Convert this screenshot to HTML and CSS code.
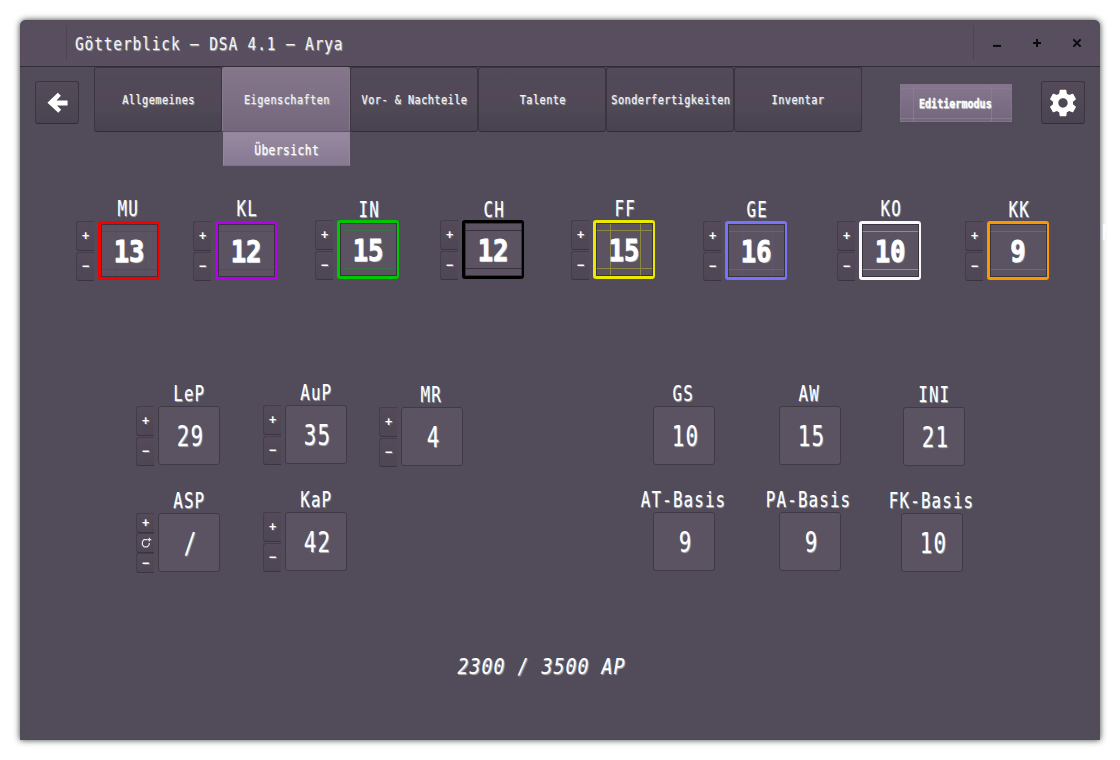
FILE: index.html
```html
<!DOCTYPE html>
<html lang="de">
<head>
<meta charset="utf-8">
<title>Götterblick – DSA 4.1 – Arya</title>
<link rel="stylesheet" href="styles.css">
</head>
<body>
<div class="window">
  <header class="titlebar">
    <span class="sep"></span>
    <h1 class="title"><span class="t">Götterblick – DSA 4.1 – Arya</span></h1>
    <div class="controls">
      <svg viewBox="0 0 12 12"><path d="M2 8.9h8" /></svg>
      <svg viewBox="0 0 12 12"><path d="M2 6h8M6 2v8" /></svg>
      <svg viewBox="0 0 12 12"><path d="M2.4 2.4l7.2 7.2M9.6 2.4l-7.2 7.2" /></svg>
    </div>
  </header>
  <nav class="toolbar">
    <div class="icon-btn back"><svg viewBox="0 0 24 24"><path d="M22.5 10v5H11.5l4.3 4.6-3 3L1.5 12.3 12.3 1.8l3.2 3.2L11 10z" fill="#fff"/></svg></div>
    <div class="tabs">
      <div class="tab"><span class="t">Allgemeines</span></div>
      <div class="tabcol">
        <div class="tab active"><span class="t">Eigenschaften</span></div>
        <div class="subtab"><span class="t">Übersicht</span></div>
      </div>
      <div class="tab"><span class="t">Vor- &amp; Nachteile</span></div>
      <div class="tab"><span class="t">Talente</span></div>
      <div class="tab"><span class="t">Sonderfertigkeiten</span></div>
      <div class="tab"><span class="t">Inventar</span></div>
    </div>
    <div class="edit"><span class="t">Editiermodus</span></div>
    <div class="icon-btn gear"><svg viewBox="0 0 24 24"><path fill="#fff" d="M19.43 12.98c.04-.32.07-.64.07-.98s-.03-.66-.07-.98l2.11-1.65c.19-.15.24-.42.12-.64l-2-3.46c-.12-.22-.39-.3-.61-.22l-2.49 1c-.52-.4-1.08-.73-1.69-.98l-.38-2.65C14.46 2.18 14.25 2 14 2h-4c-.25 0-.46.18-.49.42l-.38 2.65c-.61.25-1.17.59-1.69.98l-2.49-1c-.23-.09-.49 0-.61.22l-2 3.46c-.13.22-.07.49.12.64l2.11 1.65c-.04.32-.07.65-.07.98s.03.66.07.98l-2.11 1.65c-.19.15-.24.42-.12.64l2 3.46c.12.22.39.3.61.22l2.49-1c.52.4 1.08.73 1.69.98l.38 2.65c.03.24.24.42.49.42h4c.25 0 .46-.18.49-.42l.38-2.65c.61-.25 1.17-.59 1.69-.98l2.49 1c.23.09.49 0 .61-.22l2-3.46c.12-.22.07-.49-.12-.64l-2.11-1.65zM12 15.5c-1.93 0-3.5-1.57-3.5-3.5s1.57-3.5 3.5-3.5 3.5 1.57 3.5 3.5-1.57 3.5-3.5 3.5z"/></svg></div>
  </nav>

  <section class="row attributes">
    <div class="stat mu"><span class="label">MU</span><div class="steps"><b>+</b><b>−</b></div><div class="box"><span class="t">13</span></div></div>
    <div class="stat kl"><span class="label">KL</span><div class="steps"><b>+</b><b>−</b></div><div class="box"><span class="t">12</span></div></div>
    <div class="stat in"><span class="label">IN</span><div class="steps"><b>+</b><b>−</b></div><div class="box"><span class="t">15</span></div></div>
    <div class="stat ch"><span class="label">CH</span><div class="steps"><b>+</b><b>−</b></div><div class="box"><span class="t">12</span></div></div>
    <div class="stat ff"><span class="label">FF</span><div class="steps"><b>+</b><b>−</b></div><div class="box"><span class="t">15</span></div></div>
    <div class="stat ge"><span class="label">GE</span><div class="steps"><b>+</b><b>−</b></div><div class="box"><span class="t">16</span></div></div>
    <div class="stat ko"><span class="label">KO</span><div class="steps"><b>+</b><b>−</b></div><div class="box"><span class="t">10</span></div></div>
    <div class="stat kk"><span class="label">KK</span><div class="steps"><b>+</b><b>−</b></div><div class="box"><span class="t">9</span></div></div>
  </section>

  <section class="row derived">
    <div class="stat lep"><span class="label">LeP</span><div class="steps"><b>+</b><b>−</b></div><div class="box"><span class="t">29</span></div></div>
    <div class="stat aup"><span class="label">AuP</span><div class="steps"><b>+</b><b>−</b></div><div class="box"><span class="t">35</span></div></div>
    <div class="stat mr"><span class="label">MR</span><div class="steps"><b>+</b><b>−</b></div><div class="box"><span class="t">4</span></div></div>
    <div class="stat gs"><span class="label">GS</span><div class="box"><span class="t">10</span></div></div>
    <div class="stat aw"><span class="label">AW</span><div class="box"><span class="t">15</span></div></div>
    <div class="stat ini"><span class="label">INI</span><div class="box"><span class="t">21</span></div></div>
  </section>

  <section class="row basis">
    <div class="stat asp"><span class="label">ASP</span><div class="steps three"><b>+</b><b><svg viewBox="0 0 12 12"><path d="M7 2.6H4L2.4 4.6v3.2l1.8 2h3l2-2V6M7.3 2.6h4M9.3 .8v3.8" /></svg></b><b>−</b></div><div class="box"><span class="t">/</span></div></div>
    <div class="stat kap"><span class="label">KaP</span><div class="steps"><b>+</b><b>−</b></div><div class="box"><span class="t">42</span></div></div>
    <div class="stat at"><span class="label">AT-Basis</span><div class="box"><span class="t">9</span></div></div>
    <div class="stat pa"><span class="label">PA-Basis</span><div class="box"><span class="t">9</span></div></div>
    <div class="stat fk"><span class="label">FK-Basis</span><div class="box"><span class="t">10</span></div></div>
  </section>

  <footer class="ap"><span class="t">2300 / 3500 AP</span></footer>
  <span class="edge">N</span>
</div>
</body>
</html>
```

FILE: styles.css
```css
* { box-sizing: border-box; }
body {
  margin: 0;
  padding: 20px;
  height: 760px;
  overflow: hidden;
  background: #fff;
  color: #fff;
  font-family: "DejaVu Sans Mono", monospace;
}
.window {
  position: relative;
  display: flex;
  flex-direction: column;
  height: 720px;
  background: #524b59;
  border-radius: 6px 6px 0 0;
  box-shadow: 0 0 6px rgba(20, 30, 20, .85);
}
.t, .label {
  display: inline-block;
  flex: none;
  white-space: nowrap;
  text-shadow: 1px 1px 1px rgba(225, 230, 220, .65);
}

.titlebar {
  display: flex;
  align-items: center;
  flex: none;
  height: 47px;
  background: linear-gradient(#564d5d, #594f60);
  border-bottom: 1px solid #302b34;
  border-radius: 6px 6px 0 0;
}
.sep { width: 47px; height: 34px; border-right: 1px solid #4c4452; }
.title { flex: 1; margin: 0; padding: 2px 0 0 8px; font-size: 18.3px; font-weight: 400; line-height: 24px; }
.title .t { transform: scaleX(.79); transform-origin: left; letter-spacing: 1.13px; color: #f5f5f5; }
.controls {
  display: flex;
  align-items: center;
  gap: 28px;
  width: 127px;
  height: 34px;
  padding-left: 17px;
  border-left: 1px solid #4c4452;
}
.controls svg { width: 12px; height: 12px; flex: none; }
.controls path { fill: none; stroke: #0b0a0c; stroke-width: 2; }

.toolbar { display: flex; flex: none; height: 99px; padding-left: 15px; }
.icon-btn {
  display: grid;
  place-items: center;
  width: 44px;
  height: 43px;
  margin-top: 14px;
  border: 1px solid #3b3540;
  border-bottom-color: #312c36;
  border-radius: 3px;
  background: linear-gradient(#554a59, #4e4855 50%, #4a4352);
}
.back svg { width: 23px; height: 23px; }
.gear svg { width: 32px; height: 32px; }
.tabs { display: flex; margin-left: 15px; }
.tab {
  display: flex;
  justify-content: center;
  align-items: center;
  width: 128px;
  height: 65px;
  border: 1px solid #3b3540;
  border-bottom-color: #302b34;
  border-radius: 3px;
  background: linear-gradient(#55495a, #504957 22%, #544858 45%, #4e4855 68%, #494352 88%, #4b4250);
  font-size: 13px;
}
.tab .t { transform: translateX(.5px) scaleX(.79); letter-spacing: .55px; color: #f2f2f2; -webkit-text-stroke: .2px #f2f2f2; }
.tab.active { border-color: #887a91; background: linear-gradient(#85768c, #74677c); border-bottom-color: #625669; }
.subtab {
  display: flex;
  justify-content: center;
  align-items: center;
  width: 127px;
  height: 34px;
  margin-left: 1px;
  padding-top: 1px;
  border: 1px solid #9486a0;
  border-bottom-color: #7d7088;
  background: linear-gradient(#97899f, #877992);
  font-size: 14.4px;
}
.subtab .t { transform: scaleX(.78); letter-spacing: .6px; -webkit-text-stroke: .2px #fff; }
.edit {
  display: flex;
  justify-content: center;
  align-items: center;
  width: 112px;
  height: 38px;
  margin: 17px 29px 0 38px;
  padding-top: 1px;
  border: 1px solid #80738a;
  background:
    linear-gradient(#887a91, #887a91) 12px 0 / 1px 100% no-repeat,
    linear-gradient(#887a91, #887a91) 90px 0 / 1px 100% no-repeat,
    linear-gradient(#887a91, #887a91) 0 3px / 100% 1px no-repeat,
    linear-gradient(#887a91, #887a91) 0 33px / 100% 1px no-repeat,
    linear-gradient(#85768d, #74677d);
  font-size: 12px;
  font-weight: 700;
}
.edit .t { transform: translateX(-1px) scaleX(.84); -webkit-text-stroke: .3px #fff; }

.row { display: flex; flex: none; align-items: flex-start; }
.attributes { height: 87px; margin-top: 28px; }
.derived { height: 88px; margin-top: 98px; }
.basis { height: 87px; margin-top: 19px; }
.stat {
  display: grid;
  grid-template-columns: 22px 62px;
  grid-template-rows: 26px 59px;
  flex: none;
  width: 84px;
}
.label {
  grid-column: 2;
  justify-self: center;
  font-size: 21px;
  line-height: 26px;
  letter-spacing: 1.5px;
  transform: translate(calc(var(--lx, 0px) + 1px), calc(var(--ly, 0px) + .6px)) scaleX(.755);
}
.steps { display: flex; flex-direction: column; gap: 1px; grid-row: 2; width: 18px; height: 60px; }
.steps b {
  display: flex;
  justify-content: center;
  align-items: center;
  height: 30px;
  border: 1px solid #443c49;
  border-right: 0;
  border-bottom-color: #3b3440;
  border-radius: 3px 0 0 3px;
  background: linear-gradient(#544a59, #4e4654);
  font-size: 12px;
  line-height: 1;
  text-shadow: 1px 1px 0 #77707d;
}
.steps b + b { height: 29px; padding-bottom: 1px; }
.steps.three { gap: 0; }
.steps.three b { height: 20px; }
.steps svg { width: 12px; height: 12px; }
.steps path { fill: none; stroke: #e6e6e6; stroke-width: 1.2; }
.box {
  display: flex;
  justify-content: center;
  align-items: center;
  grid-column: 2;
  grid-row: 2;
  border: 1px solid #403946;
  border-radius: 3px;
  background: #5b5262;
  font-size: 27.5px;
}
.box .t { transform: translate(.5px, -.5px) scaleX(.76); letter-spacing: 1.4px; margin-right: -1.4px; }
.attributes .box {
  border: 3px solid var(--c);
  border-width: 3px 2px 3px 3px;
  background:
    linear-gradient(var(--h), var(--h)) 0 10px / 100% 1px no-repeat border-box,
    linear-gradient(var(--h), var(--h)) 0 48px / 100% 1px no-repeat border-box,
    linear-gradient(var(--v), var(--v)) 17px 0 / 1px 100% no-repeat border-box,
    linear-gradient(var(--v), var(--v)) 47px 0 / 1px 100% no-repeat border-box,
    #5b5262;
  box-shadow: inset 0 0 0 1px rgba(35, 30, 40, .6);
  font-size: 30px;
  font-weight: 700;
}
.attributes .box .t { transform: translateY(1px) scaleX(.85); letter-spacing: 0; margin-right: 0; -webkit-text-stroke: .8px #fff; }

.mu { --c: #f50000; --h: #7b394b; --v: #6c455a; --lx: -2px; margin: 1px 0 0 56px; }
.kl { --c: #b500ee; --h: #693880; --v: transparent; margin: 1px 0 0 33px; }
.in { --c: #00c800; --h: #3c7146; --v: #57575e; --ly: 2px; margin-left: 38px; }
.ch { --c: #000; --h: #38323d; --v: transparent; --ly: 2px; margin-left: 41px; }
.ff { --c: #ece900; --h: #8e8940; --v: #8e8940; --ly: 1px; margin-left: 47px; }
.ge { --c: #7774fa; --h: #645f91; --v: #5f5770; --ly: 1px; margin: 1px 0 0 48px; }
.ko { --c: #f8f8f8; --h: #918b95; --v: transparent; margin: 1px 0 0 50px; }
.kk { --c: #fa9800; --h: #866541; --v: transparent; --ly: 1px; margin: 1px 0 0 44px; }
.lep { --lx: -1px; margin: 1px 0 0 116px; }
.aup { --lx: -1px; margin-left: 43px; }
.mr { --lx: -2px; margin: 2px 0 0 32px; }
.gs { --lx: -2px; margin: 1px 0 0 168px; }
.aw { --lx: -2px; margin: 1px 0 0 42px; }
.ini { --lx: -1px; margin: 2px 0 0 40px; }
.asp { --lx: -1px; margin: 1px 0 0 116px; }
.kap { --lx: -1px; margin-left: 43px; }
.at { --lx: -1px; margin-left: 284px; }
.pa { --lx: -2px; margin-left: 42px; }
.fk { --lx: -1px; margin: 1px 0 0 38px; }

.ap {
  display: flex;
  justify-content: center;
  margin-top: 79px;
  padding-right: 37px;
  font-size: 21px;
  font-style: italic;
  line-height: 30px;
}
.ap .t { transform: scaleX(.87); letter-spacing: 1.15px; }
.edge { position: absolute; left: 1082px; top: 200px; font-size: 21px; line-height: 26px; transform: scaleX(.84); transform-origin: left; }
```
